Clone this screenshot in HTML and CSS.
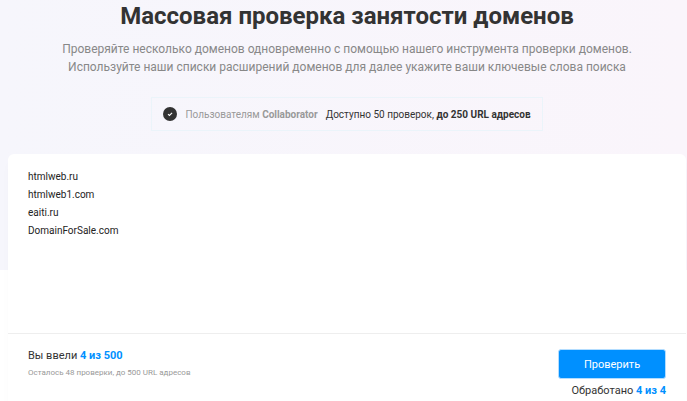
FILE: index.html
```html
<!DOCTYPE html>
<html lang="ru">
<head>
    <meta charset="UTF-8">
    <meta name="viewport" content="width=device-width, initial-scale=1.0">
    <title>Массовая проверка занятости доменов</title>
    <link rel="stylesheet" href="styles.css">
</head>
<body>
    <main>
        <header class="intro">
            <h1>Массовая проверка занятости доменов</h1>
            <p>Проверяйте несколько доменов одновременно с помощью нашего инструмента проверки доменов. Используйте наши списки расширений доменов для далее укажите ваши ключевые слова поиска</p>
        </header>

        <div class="notice">
            <svg class="notice-icon" viewBox="0 0 14 14" aria-hidden="true">
                <circle cx="7" cy="7" r="7" fill="#333"/>
                <path d="M5 7.1l1.4 1.3L9.1 5.8" fill="none" stroke="#fff" stroke-width="1.1"/>
            </svg>
            <span class="notice-users">Пользователям <b>Collaborator</b></span>
            <span>Доступно 50 проверок, <b>до 250 URL адресов</b></span>
        </div>

        <form class="checker">
            <textarea class="domains" aria-label="Список доменов" spellcheck="false">htmlweb.ru
htmlweb1.com
eaiti.ru
DomainForSale.com</textarea>
            <div class="checker-footer">
                <div>
                    <div class="count">Вы ввели <b>4 из 500</b></div>
                    <div class="left">Осталось 48 проверки, до 500 URL адресов</div>
                </div>
                <div class="actions">
                    <button class="check-btn" type="button">Проверить</button>
                    <div class="count">Обработано <b>4 из 4</b></div>
                </div>
            </div>
        </form>
    </main>
</body>
</html>
```
FILE: styles.css
```css
* {
    margin: 0;
    padding: 0;
    box-sizing: border-box;
}

body {
    background: linear-gradient(to right, #f6f6fc, #faf5fb) no-repeat top / 100% 270px #fff;
    color: #333;
    font-family: Roboto, sans-serif;
    overflow: hidden;
}

main {
    padding: 0 1px 0 8px;
}

.intro {
    max-width: 600px;
    margin: 0 auto;
    text-align: center;
}

.intro h1 {
    font-size: 24px;
    line-height: 32px;
    margin-bottom: 8px;
}

.intro p {
    color: #888;
    font-size: 12px;
    line-height: 18px;
}

.notice {
    display: flex;
    align-items: center;
    gap: 8px;
    width: fit-content;
    height: 34px;
    margin: 21px auto 23px;
    padding: 0 11px;
    border: 1px solid #ebf4fa;
    font-size: 10px;
}

.notice-icon {
    width: 14px;
    height: 14px;
}

.notice-users {
    color: #999;
}

.checker {
    background-color: #fff;
    border-radius: 6px;
    box-shadow: 0 8px 8px rgba(0, 0, 0, 0.02);
}

.domains {
    display: block;
    width: 100%;
    height: 179px;
    padding: 14px 20px;
    border: none;
    outline: none;
    resize: none;
    background: none;
    color: #222;
    font-family: inherit;
    font-size: 10px;
    line-height: 18px;
}

.checker-footer {
    display: flex;
    justify-content: space-between;
    padding: 15px 20px;
    border-top: 1px solid #eee;
}

.count {
    font-size: 11px;
    line-height: 14px;
}

.count b {
    color: #0090ff;
}

.left {
    margin-top: 4px;
    color: #999;
    font-size: 8px;
    line-height: 12px;
}

.actions {
    text-align: right;
}

.check-btn {
    width: 108px;
    height: 30px;
    margin-bottom: 5px;
    border: 1px solid #b3ddff;
    border-radius: 3px;
    background-color: #0090ff;
    color: #fff;
    font-family: inherit;
    font-size: 11px;
    cursor: pointer;
}
```
